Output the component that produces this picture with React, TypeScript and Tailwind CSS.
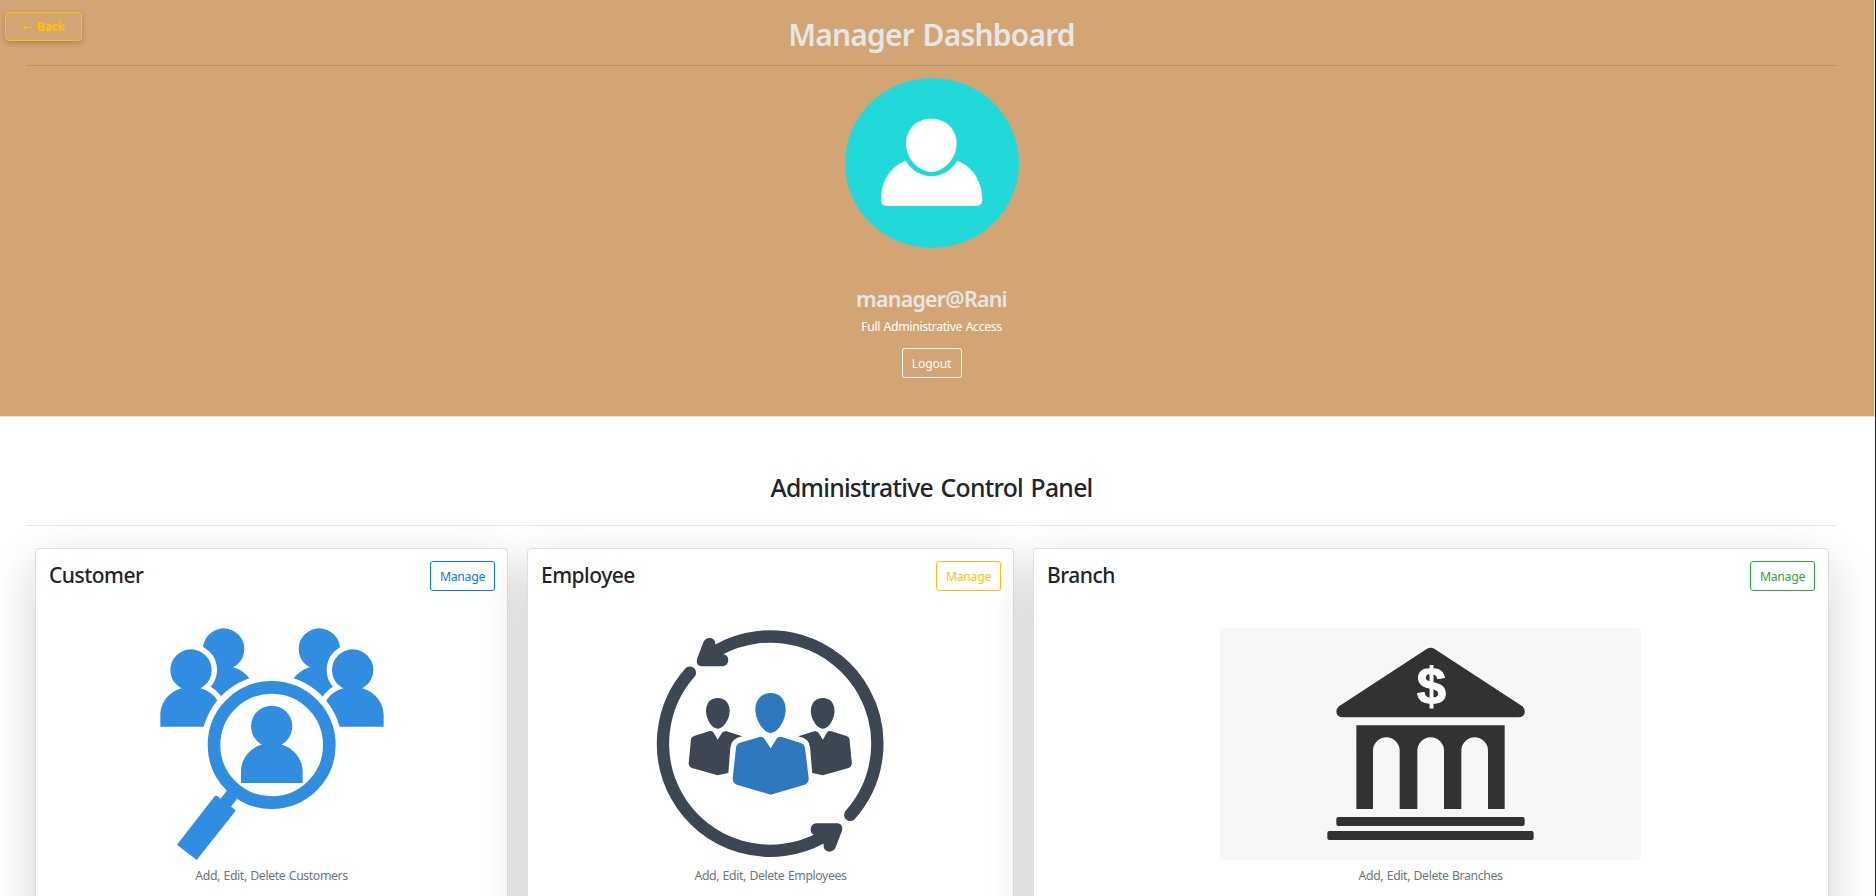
import type { ReactNode } from "react";

const PERSON = "M-92 170 V136 C-92 95 -62 62 -25 54 Q0 66 25 54 C62 62 93 95 93 136 V170Z";

function Person({ x, y, outlined = false }: { x: number; y: number; outlined?: boolean }) {
  return (
    <g transform={`translate(${x} ${y})`}>
      {outlined && (
        <g fill="#fff" stroke="#fff" strokeWidth="32">
          <circle r="62" />
          <path d={PERSON} />
        </g>
      )}
      <circle r="62" />
      <path d={PERSON} />
    </g>
  );
}

function CustomerArt() {
  return (
    <svg className="h-[232px] w-[224px]" viewBox="60 54 672 696" fill="#318ddf">
      <Person x={251} y={117} />
      <Person x={538} y={117} />
      <Person x={153} y={180} outlined />
      <Person x={638} y={180} outlined />
      <circle cx="395" cy="405" r="211" fill="#fff" />
      <circle cx="395" cy="405" r="173" fill="none" stroke="#318ddf" strokeWidth="38" />
      <Person x={395} y={349} />
      <path d="M111 704 L224 559 Q228 555 233 559 L242 566 L262 540 L291 567 L273 590 L284 598 Q287 602 284 606 L170 750Z" />
    </svg>
  );
}

function SidePerson() {
  return (
    <g>
      <path d="M234 249 C256 249 270 265 270 288 C270 312 252 341 234 341 C216 341 199 312 199 288 C199 265 212 249 234 249Z" />
      <path d="M208 349 Q218 346 222 353 L234 374 L247 353 Q251 347 260 349 L308 364 Q274 370 272 398 L266 474 L234 481 L157 459 Q147 455 147 445 L154 373 Q155 365 163 363Z" />
    </g>
  );
}

const ARROW =
  "M191 82 C198 63 226 65 227 85 L228 96 L252 118 C271 120 271 152 250 154 L185 154 Q168 152 172 132Z";

function EmployeeArt() {
  return (
    <svg className="mr-px size-[232px]" viewBox="43 39 696 696" fill="#3d4653">
      <circle
        cx="391.5"
        cy="386"
        r="321.5"
        fill="none"
        stroke="#3d4653"
        strokeWidth="37"
        strokeLinecap="round"
        pathLength="360"
        strokeDasharray="160.4 19.6"
        transform="rotate(61 391.5 386)"
      />
      <path d={ARROW} />
      <path d={ARROW} transform="translate(-4 7) rotate(180 391.5 386)" />
      <SidePerson />
      <g transform="translate(783.5 0) scale(-1 1)">
        <SidePerson />
      </g>
      <g fill="#2e79be">
        <path d="M393 234 C420 234 438 254 438 283 C438 315 415 354 393 354 C371 354 347 315 347 283 C347 254 366 234 393 234Z" />
        <path d="M360 366 Q369 363 373 370 L393 400 L412 370 Q417 363 426 366 L484 384 Q494 388 496 398 L507 490 Q508 503 495 509 L393 539 L291 509 Q279 504 279 491 L289 398 Q290 387 301 383Z" />
      </g>
    </svg>
  );
}

function BranchArt() {
  return (
    <svg className="h-[232px] w-[421px] rounded bg-[#f7f7f7]" viewBox="120 84 1263 696" fill="#323232">
      <path d="M740 147 Q752 140 764 147 L1027 319 Q1036 328 1034 340 Q1030 352 1016 352 H487 Q470 350 469 335 Q469 326 477 319Z" />
      <text
        x="754"
        y="312"
        textAnchor="middle"
        fontSize="158"
        fontFamily="Liberation Sans, sans-serif"
        fontWeight="700"
        fill="#fff"
        stroke="#fff"
        strokeWidth="3"
        strokeLinejoin="round"
      >
        $
      </text>
      <path d="M529 376 H974 V627 H924 V452 a40 40 0 0 0 -80 0 V627 H792 V452 a40 40 0 0 0 -80 0 V627 H659 V452 a40 40 0 0 0 -80 0 V627 H529Z" />
      <rect x="469" y="651" width="565" height="27" rx="6" />
      <rect x="442" y="693" width="619" height="27" rx="6" />
    </svg>
  );
}

function Avatar() {
  return (
    <svg className="mt-3 h-[170px] w-[174px]" viewBox="255 234 522 510">
      <ellipse cx="516" cy="489" rx="261" ry="255" fill="#22d9da" />
      <g fill="#fff">
        <path d="M514 356 C558 356 590 388 590 430 C590 475 553 516 514 516 C475 516 438 475 438 430 C438 388 470 356 514 356Z" />
        <path d="M437 482 C475 544 553 544 592 482 C640 500 667 548 667 598 Q668 618 648 618 H383 Q363 618 363 599 C363 545 390 500 437 482Z" />
      </g>
    </svg>
  );
}

type CardProps = {
  title: string;
  caption: string;
  width: string;
  button: string;
  children: ReactNode;
};

function Card({ title, caption, width, button, children }: CardProps) {
  return (
    <article
      className={`${width} h-[420px] shrink-0 rounded border border-[#dfdfdf] bg-white pt-3 pl-3 shadow-[0_16px_48px_rgba(0,0,0,0.175)]`}
    >
      <div className="flex h-[30px] items-start justify-between">
        <h3 className="pl-px text-[21px] leading-[28px] font-medium tracking-[-0.5px] text-[#212529]">{title}</h3>
        <button
          className={`h-[30px] w-[65px] rounded-[3px] border pt-px text-[12.25px] leading-[28px] tracking-[-0.3px] ${button}`}
        >
          Manage
        </button>
      </div>
      <div className="mt-[37px] flex flex-col items-center">
        {children}
        <p className="mt-[6px] text-[12.25px] leading-5 tracking-[-0.38px] text-[#6c757d] [word-spacing:0.7px]">
          {caption}
        </p>
      </div>
    </article>
  );
}

export default function App() {
  return (
    <div className="relative h-[896px] overflow-hidden border-r border-[#222] bg-white font-['Noto_Sans',sans-serif]">
      <header className="flex h-[417px] flex-col items-center border-r border-b border-[#dee2e6] bg-[#d3a474] pr-[37px] pl-[26px]">
        <h1 className="mt-4 text-[30px] leading-[38px] font-semibold tracking-[-0.8px] text-[#e6e6e6] [word-spacing:1.5px]">
          Manager Dashboard
        </h1>
        <hr className="mt-[11px] w-full border-black/10" />
        <Avatar />
        <h2 className="mt-[37px] text-[21.5px] leading-[28px] font-semibold tracking-[-0.8px] text-[#e6e6e6]">
          manager@Rani
        </h2>
        <p className="mt-1 text-[12.25px] leading-5 tracking-[-0.35px] text-white [word-spacing:0.7px]">
          Full Administrative Access
        </p>
        <button className="mt-[11px] h-[30px] w-[60px] rounded-[3px] border border-[#f8f9fa] pt-px text-[12.25px] leading-[28px] tracking-[-0.2px] text-[#f8f9fa]">
          Logout
        </button>
      </header>
      <button className="absolute top-3 left-[5px] h-[29px] w-[77px] rounded border border-[#ffc107] text-[12px] leading-[27px] font-bold tracking-[-0.3px] text-[#ffc107] shadow-[0_2px_5px_rgba(0,0,0,0.2)] [word-spacing:2px]">
        <span className="font-['DejaVu_Sans',sans-serif] font-normal">←</span> Back
      </button>
      <main className="flex flex-col items-center pt-[55px] pr-[38px] pl-[26px]">
        <h2 className="text-[24.75px] leading-8 font-medium tracking-[-0.75px] text-[#212529] [word-spacing:2px]">
          Administrative Control Panel
        </h2>
        <hr className="mt-[21px] w-full border-black/10" />
        <section className="mt-[22px] flex w-full gap-[19px] pl-[9px]">
          <Card
            title="Customer"
            caption="Add, Edit, Delete Customers"
            width="w-[473px] pr-3"
            button="border-[#007bff] text-[#007bff]"
          >
            <CustomerArt />
          </Card>
          <Card
            title="Employee"
            caption="Add, Edit, Delete Employees"
            width="w-[487px] pr-3"
            button="border-[#ffc107] text-[#ffc107]"
          >
            <EmployeeArt />
          </Card>
          <Card
            title="Branch"
            caption="Add, Edit, Delete Branches"
            width="w-[796px] pr-[13px]"
            button="border-[#28a745] text-[#28a745]"
          >
            <BranchArt />
          </Card>
        </section>
      </main>
    </div>
  );
}
